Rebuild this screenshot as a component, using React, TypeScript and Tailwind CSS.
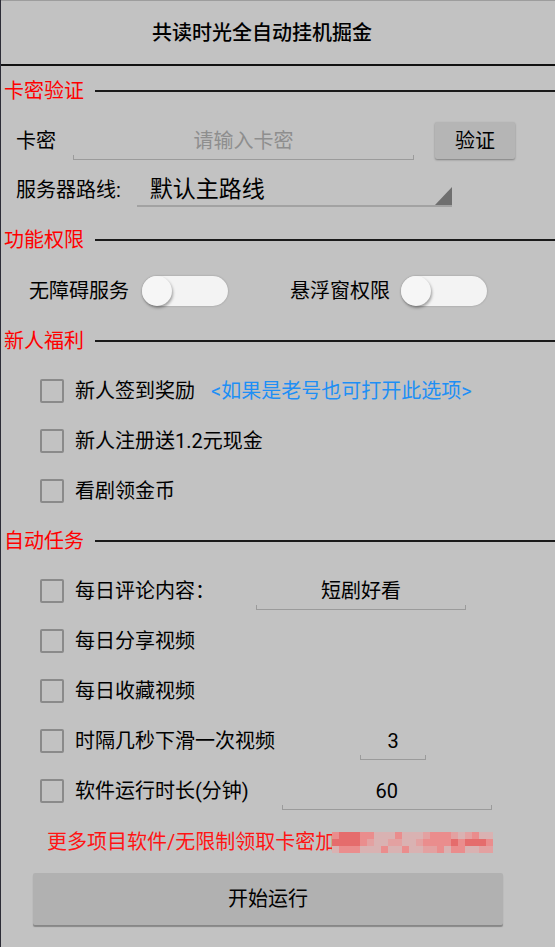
import type { ReactNode } from 'react';

const mosaicRows = [
  'baaabbcccbcccdbbbdcdbcc',
  'aaaabdccddccdbbbbabaaab',
  'cbbbcccbccbccddbcbbccdd',
];

const mosaicColor: Record<string, string> = {
  a: '#e56c6c',
  b: '#ea8d8d',
  c: '#d9b2b2',
  d: '#e3a1a1',
};

function SectionTitle({ title }: { title: string }) {
  return (
    <div className="flex h-[50px] items-center">
      <span className="pl-[3px] text-[20px] leading-[28px] text-[#ff0000]">{title}</span>
      <div className="ml-[11px] h-[1.5px] flex-1 bg-[#1a1a1a]" />
    </div>
  );
}

function Checkbox() {
  return <div className="h-[24px] w-[24px] shrink-0 rounded-[2px] border-2 border-[#8a8a8a]" />;
}

function CheckRow({ label, children }: { label: string; children?: ReactNode }) {
  return (
    <div className="flex h-[50px] items-center pl-[39px]">
      <Checkbox />
      <span className="ml-[11px] whitespace-nowrap text-[20px] leading-[28px] text-black">{label}</span>
      {children}
    </div>
  );
}

function LineField({
  value,
  placeholder,
  className,
}: {
  value?: string;
  placeholder?: string;
  className: string;
}) {
  return (
    <div className={`flex flex-col pt-[5px] ${className}`}>
      <span
        className={`text-center text-[20px] leading-[28px] ${value ? 'text-black' : 'text-[#8e8e8e]'}`}
      >
        {value ?? placeholder}
      </span>
      <div className="h-[5px] border-x-[1.5px] border-b-[1.5px] border-[#9b9b9b]" />
    </div>
  );
}

function Toggle() {
  return (
    <div className="flex h-[30px] w-[86px] items-center rounded-full bg-[#f3f3f3] shadow-[0_0_2px_rgba(0,0,0,0.25)]">
      <div className="h-[30px] w-[30px] rounded-full bg-[#f6f6f6] shadow-[1px_2px_3px_rgba(0,0,0,0.35)]" />
    </div>
  );
}

function Mosaic() {
  return (
    <svg width="161" height="21" viewBox="0 0 161 21" className="-ml-[3px] block">
      {mosaicRows.map((row, y) =>
        row.split('').map((code, x) => (
          <rect key={`${x}-${y}`} x={x * 7} y={y * 7} width="7" height="7" fill={mosaicColor[code]} />
        )),
      )}
    </svg>
  );
}

export default function App() {
  return (
    <div className="min-h-[947px] w-full border-l border-[#2c2c36] bg-[#c2c2c2] font-['Roboto','Noto_Sans_CJK_SC',sans-serif] text-black">
      <div className="h-[1px] bg-[#9d9d9d]" />
      <header className="flex h-[65px] items-center justify-center border-b-2 border-[#111] pr-[32px]">
        <h1 className="text-[20px] font-medium leading-[28px]">共读时光全自动挂机掘金</h1>
      </header>

      <SectionTitle title="卡密验证" />
      <div className="flex h-[49px] items-center pl-[15px]">
        <span className="w-[40px] text-[20px] leading-[28px]">卡密</span>
        <LineField placeholder="请输入卡密" className="ml-[17px] w-[341px]" />
        <button className="ml-[21px] h-[37px] w-[80px] rounded-[2px] bg-[#b5b5b5] text-[20px] leading-[28px] shadow-[0_1px_2px_rgba(0,0,0,0.35)]">
          验证
        </button>
      </div>
      <div className="flex h-[50px] items-center pl-[15px]">
        <span className="whitespace-nowrap text-[20px] leading-[28px]">服务器路线:</span>
        <div className="ml-[16px] flex w-[315px] flex-col pt-[2px]">
          <div className="flex items-end justify-between">
            <span className="pl-[13px] text-[23px] leading-[30px]">默认主路线</span>
            <svg width="17" height="18" viewBox="0 0 17 18" className="block">
              <polygon points="17,0 17,18 0,18" fill="#6f6f6f" />
            </svg>
          </div>
          <div className="h-[1.5px] bg-[#a2a2a2]" />
        </div>
      </div>

      <SectionTitle title="功能权限" />
      <div className="flex h-[51px] items-center pl-[28px]">
        <span className="text-[20px] leading-[28px]">无障碍服务</span>
        <div className="ml-[13px]">
          <Toggle />
        </div>
        <span className="ml-[62px] text-[20px] leading-[28px]">悬浮窗权限</span>
        <div className="ml-[11px]">
          <Toggle />
        </div>
      </div>

      <SectionTitle title="新人福利" />
      <CheckRow label="新人签到奖励">
        <span className="ml-[16px] whitespace-nowrap text-[20px] leading-[28px] text-[#1e8ff5]">
          &lt;如果是老号也可打开此选项&gt;
        </span>
      </CheckRow>
      <CheckRow label="新人注册送1.2元现金" />
      <CheckRow label="看剧领金币" />

      <SectionTitle title="自动任务" />
      <CheckRow label="每日评论内容：">
        <LineField value="短剧好看" className="ml-[41px] w-[210px]" />
      </CheckRow>
      <CheckRow label="每日分享视频" />
      <CheckRow label="每日收藏视频" />
      <CheckRow label="时隔几秒下滑一次视频">
        <LineField value="3" className="ml-[85px] w-[66px]" />
      </CheckRow>
      <CheckRow label="软件运行时长(分钟)">
        <LineField value="60" className="ml-[33px] w-[210px]" />
      </CheckRow>

      <div className="flex h-[52px] items-center pl-[46px]">
        <span className="whitespace-nowrap text-[20px] leading-[28px] text-[#ff1414]">更多项目软件/无限制领取卡密加</span>
        <Mosaic />
      </div>
      <div className="mt-[5px] pl-[32px]">
        <button className="h-[52px] w-[470px] rounded-[2px] bg-[#b1b1b1] text-[20px] leading-[28px] shadow-[0_2px_1px_rgba(0,0,0,0.3)]">
          开始运行
        </button>
      </div>
    </div>
  );
}
